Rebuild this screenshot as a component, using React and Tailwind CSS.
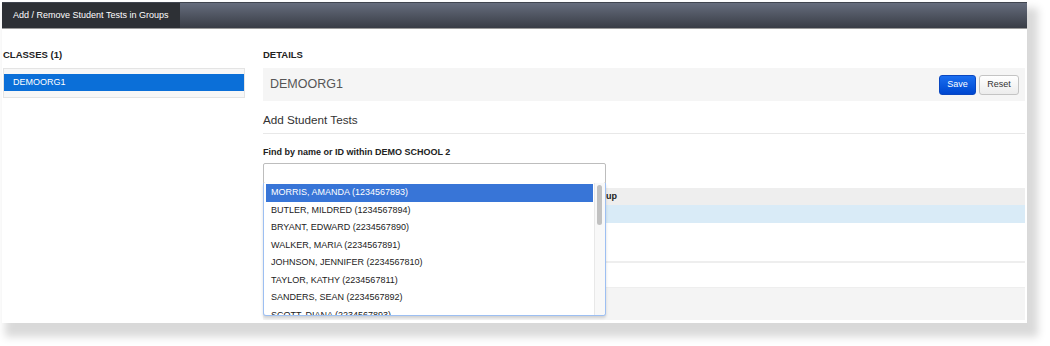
export default function App() {
  const items = [
    "MORRIS, AMANDA (1234567893)",
    "BUTLER, MILDRED (1234567894)",
    "BRYANT, EDWARD (2234567890)",
    "WALKER, MARIA (2234567891)",
    "JOHNSON, JENNIFER (2234567810)",
    "TAYLOR, KATHY (2234567811)",
    "SANDERS, SEAN (2234567892)",
    "SCOTT, DIANA (2234567893)",
  ];
  return (
    <div className="w-[1050px] h-[346px] bg-white pt-[2px] pl-[2px] overflow-hidden [font-family:'Liberation_Sans',Arial,sans-serif]">
      <div className="w-[1025px] h-[321px] bg-white overflow-hidden flex flex-col shadow-[7px_10px_8px_4px_rgba(0,0,0,0.15)]">
        {/* header */}
        <div className="h-[27px] shrink-0 flex border-t border-t-[#40454f] border-b border-b-[#9a9a9a] bg-linear-to-b from-[#666d7d] to-[#393d46]">
          <div className="w-[178px] bg-[#2d3035] text-white text-[9px] pl-[11px] flex items-center">
            Add / Remove Student Tests in Groups
          </div>
        </div>
        {/* body */}
        <div className="flex pt-[20px]">
          {/* left */}
          <div className="ml-[1px] w-[242px]">
            <div className="text-[9.5px] font-bold leading-[12px] text-[#222]">CLASSES (1)</div>
            <div className="mt-[7px] border border-[#e4e4e4] bg-[#f7f7f7] pt-[5px] pb-[6px]">
              <div className="h-[17px] bg-[#0b6fd8] text-white text-[9px] pl-[9px] flex items-center">DEMOORG1</div>
            </div>
          </div>
          {/* right */}
          <div className="ml-[18px] w-[762px]">
            <div className="text-[9.5px] font-bold leading-[12px] text-[#222]">DETAILS</div>
            <div className="mt-[7px] h-[33px] bg-[#f5f5f5] flex items-center justify-between pl-[7px] pr-[6px]">
              <span className="text-[12.5px] text-[#555]">DEMOORG1</span>
              <div className="flex gap-[3px]">
                <button className="h-[20px] w-[37px] text-[9px] text-white bg-linear-to-b from-[#1a6ef0] to-[#0046d0] border border-[#0a47c0] rounded-[3px] flex items-center justify-center">
                  Save
                </button>
                <button className="h-[20px] w-[40px] text-[9px] text-[#333] bg-linear-to-b from-white to-[#ececec] border border-[#c4c4c4] rounded-[3px] flex items-center justify-center">
                  Reset
                </button>
              </div>
            </div>
            <div className="mt-[12px] pb-[6px] border-b border-[#e8e8e8] text-[11.7px] leading-[14px] text-[#333]">
              Add Student Tests
            </div>
            <div className="mt-[12px] text-[9px] font-bold leading-[12px] text-[#222]">
              Find by name or ID within DEMO SCHOOL 2
            </div>
            <div className="relative mt-[5px]">
              <div className="w-[343px] h-[21px] border border-[#bdbdbd] bg-white rounded-[2px]" />
              <div className="absolute top-[20px] left-0 w-[343px] h-[133px] border border-[#9dbff2] border-t-0 bg-white rounded-b-[3px] shadow-[0_2px_3px_rgba(0,0,0,0.15)] z-10 flex overflow-hidden">
                <div className="flex-1 pl-[2px] pr-[1px] pt-[1px] overflow-hidden">
                  {items.map((it, i) => (
                    <div
                      key={it}
                      className={
                        i === 0
                          ? "h-[17.5px] leading-[17.5px] pl-[5px] text-[9px] whitespace-nowrap bg-[#3875d7] text-white"
                          : "h-[17.5px] leading-[17.5px] pl-[5px] text-[9px] whitespace-nowrap text-[#222]"
                      }
                    >
                      {it}
                    </div>
                  ))}
                </div>
                <div className="w-[11px] bg-[#f8f8f8] border-l border-[#e8e8e8] pt-[2px] pl-[2px]">
                  <div className="w-[5px] h-[40px] rounded-full bg-[#c1c1c1]" />
                </div>
              </div>
              {/* table behind */}
              <div className="mt-[4px]">
                <div className="h-[17px] bg-[#eeeeee] flex items-center pl-[327px] text-[9px] font-bold text-[#222]">Group</div>
                <div className="h-[18px] bg-[#d9ebf7]" />
                <div className="h-[38px] border-b-2 border-[#eeeeee] box-content" />
                <div className="h-[24px] border-b border-[#eeeeee] box-content" />
                <div className="h-[32px] bg-[#f4f4f4]" />
              </div>
            </div>
          </div>
        </div>
      </div>
    </div>
  );
}
